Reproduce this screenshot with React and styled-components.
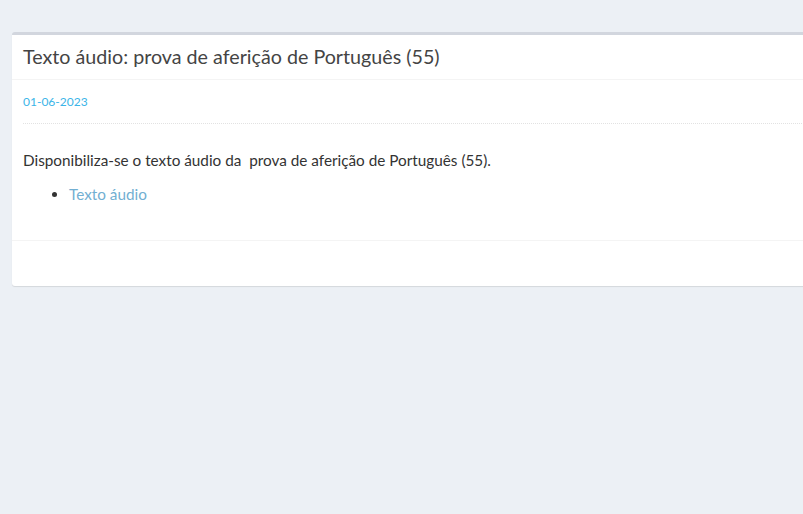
import React from 'react';
import styled, { createGlobalStyle } from 'styled-components';

const GlobalStyle = createGlobalStyle`
  html, body {
    margin: 0;
    padding: 0;
    background: #ecf0f5;
    font-family: 'Lato', 'Liberation Sans', sans-serif;
    color: #333;
  }
`;

const Page = styled.div`
  padding: 32px 0 0 12px;
  min-height: 100vh;
  box-sizing: border-box;
`;

const Box = styled.div`
  background: #fff;
  border-top: 3px solid #d2d6de;
  border-radius: 3px 0 0 3px;
  box-shadow: 0 1px 1px rgba(0, 0, 0, 0.1);
  margin-right: -10px;
`;

const BoxHeader = styled.div`
  padding: 10px 11px;
  border-bottom: 1px solid #f4f4f4;
`;

const BoxTitle = styled.h3`
  margin: 0;
  font-size: 19.7px;
  font-weight: 400;
  line-height: 24px;
  color: #444;
`;

const BoxBody = styled.div`
  padding: 0 11px;
`;

const DateRow = styled.div`
  font-size: 12px;
  color: #3bb5e8;
  padding: 14px 0 14px;
  border-bottom: 1px dotted #e2e2e2;
`;

const Content = styled.div`
  font-size: 15.3px;
  padding: 27px 0 37px;

  p {
    margin: 0 0 16px;
  }
`;

const List = styled.ul`
  margin: 0;
  padding-left: 46px;
`;

const Link = styled.a`
  color: #72afd2;
  text-decoration: none;
`;

const BoxFooter = styled.div`
  border-top: 1px solid #f4f4f4;
  height: 45px;
`;

const App = () => {
  return (
    <>
      <GlobalStyle />
      <Page>
        <Box>
          <BoxHeader>
            <BoxTitle>Texto áudio: prova de aferição de Português (55)</BoxTitle>
          </BoxHeader>
          <BoxBody>
            <DateRow>01-06-2023</DateRow>
            <Content>
              <p>Disponibiliza-se o texto áudio da&nbsp; prova de aferição de Português (55).</p>
              <List>
                <li><Link href="#">Texto áudio</Link></li>
              </List>
            </Content>
          </BoxBody>
          <BoxFooter />
        </Box>
      </Page>
    </>
  );
};

export default App;
